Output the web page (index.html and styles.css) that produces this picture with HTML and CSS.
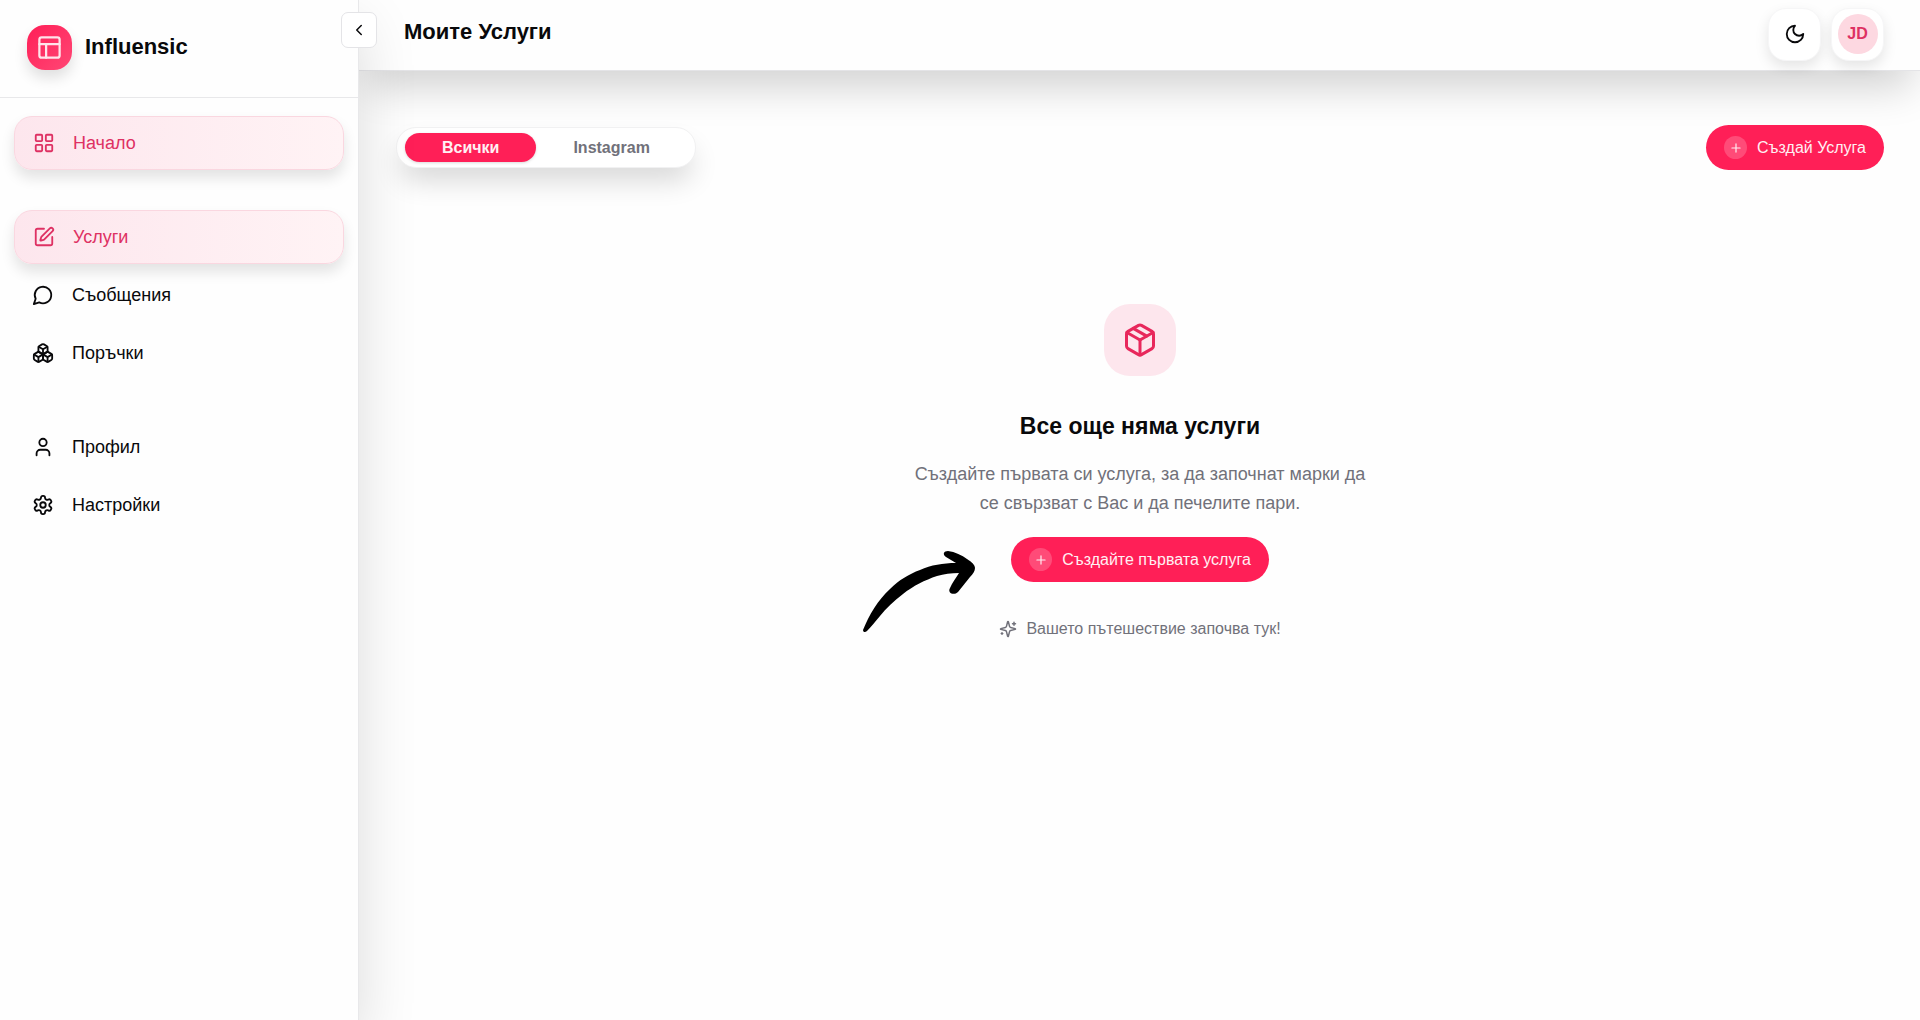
FILE: index.html
```html
<!DOCTYPE html>
<html lang="bg">
<head>
  <meta charset="UTF-8">
  <title>Моите Услуги</title>
  <link rel="stylesheet" href="styles.css">
</head>
<body>
  <div class="app">
    <aside class="sidebar">
      <div class="brand">
        <div class="brand-logo">
          <svg class="icon" viewBox="0 0 24 24"><rect x="3" y="3" width="18" height="18" rx="2"/><path d="M3 9h18M9 21V9"/></svg>
        </div>
        <span class="brand-name">Influensic</span>
      </div>

      <nav class="nav">
        <div class="nav-group">
          <a href="#" class="nav-item active">
            <svg class="icon" viewBox="0 0 24 24"><rect x="3" y="3" width="7" height="7" rx="1"/><rect x="14" y="3" width="7" height="7" rx="1"/><rect x="14" y="14" width="7" height="7" rx="1"/><rect x="3" y="14" width="7" height="7" rx="1"/></svg>
            Начало
          </a>
        </div>
        <div class="nav-group">
          <a href="#" class="nav-item active">
            <svg class="icon" viewBox="0 0 24 24"><path d="M12 3H5a2 2 0 0 0-2 2v14a2 2 0 0 0 2 2h14a2 2 0 0 0 2-2v-7"/><path d="M18.375 2.625a1 1 0 0 1 3 3l-9.013 9.014a2 2 0 0 1-.853.505l-2.873.84a.5.5 0 0 1-.62-.62l.84-2.873a2 2 0 0 1 .506-.852z"/></svg>
            Услуги
          </a>
          <a href="#" class="nav-item">
            <svg class="icon" viewBox="0 0 24 24"><path d="M7.9 20A9 9 0 1 0 4 16.1L2 22Z"/></svg>
            Съобщения
          </a>
          <a href="#" class="nav-item">
            <svg class="icon" viewBox="0 0 24 24"><path d="M2.97 12.92A2 2 0 0 0 2 14.63v3.24a2 2 0 0 0 .97 1.71l3 1.8a2 2 0 0 0 2.06 0L12 19v-5.5l-5-3-4.03 2.42Z"/><path d="m7 16.5-4.74-2.85M7 16.5l5-3M7 16.5v5.17"/><path d="M12 13.5V19l3.97 2.38a2 2 0 0 0 2.06 0l3-1.8a2 2 0 0 0 .97-1.71v-3.24a2 2 0 0 0-.97-1.71L17 10.5l-5 3Z"/><path d="m17 16.5-5-3M17 16.5l4.74-2.85M17 16.5v5.17"/><path d="M7.97 4.42A2 2 0 0 0 7 6.13v4.37l5 3 5-3V6.13a2 2 0 0 0-.97-1.71l-3-1.8a2 2 0 0 0-2.06 0l-3 1.8Z"/><path d="M12 8 7.26 5.15M12 8l4.74-2.85M12 13.5V8"/></svg>
            Поръчки
          </a>
        </div>
        <div class="nav-group">
          <a href="#" class="nav-item">
            <svg class="icon" viewBox="0 0 24 24"><path d="M19 21v-2a4 4 0 0 0-4-4H9a4 4 0 0 0-4 4v2"/><circle cx="12" cy="7" r="4"/></svg>
            Профил
          </a>
          <a href="#" class="nav-item">
            <svg class="icon" viewBox="0 0 24 24"><path d="M12.22 2h-.44a2 2 0 0 0-2 2v.18a2 2 0 0 1-1 1.73l-.43.25a2 2 0 0 1-2 0l-.15-.08a2 2 0 0 0-2.73.73l-.22.38a2 2 0 0 0 .73 2.73l.15.1a2 2 0 0 1 1 1.72v.51a2 2 0 0 1-1 1.74l-.15.09a2 2 0 0 0-.73 2.73l.22.38a2 2 0 0 0 2.73.73l.15-.08a2 2 0 0 1 2 0l.43.25a2 2 0 0 1 1 1.73V20a2 2 0 0 0 2 2h.44a2 2 0 0 0 2-2v-.18a2 2 0 0 1 1-1.73l.43-.25a2 2 0 0 1 2 0l.15.08a2 2 0 0 0 2.73-.73l.22-.39a2 2 0 0 0-.73-2.73l-.15-.08a2 2 0 0 1-1-1.74v-.5a2 2 0 0 1 1-1.74l.15-.09a2 2 0 0 0 .73-2.73l-.22-.38a2 2 0 0 0-2.73-.73l-.15.08a2 2 0 0 1-2 0l-.43-.25a2 2 0 0 1-1-1.73V4a2 2 0 0 0-2-2z"/><circle cx="12" cy="12" r="3"/></svg>
            Настройки
          </a>
        </div>
      </nav>

      <button class="collapse-btn" type="button" aria-label="Скрий менюто">
        <svg class="icon" viewBox="0 0 24 24"><path d="m15 18-6-6 6-6"/></svg>
      </button>
    </aside>

    <div class="page">
      <header class="topbar">
        <h1>Моите Услуги</h1>
        <div class="topbar-actions">
          <button class="square-btn" type="button" aria-label="Тъмна тема">
            <svg class="icon" viewBox="0 0 24 24"><path d="M12 3a6 6 0 0 0 9 9 9 9 0 1 1-9-9Z"/></svg>
          </button>
          <button class="square-btn" type="button"><span class="avatar">JD</span></button>
        </div>
      </header>

      <main class="content">
        <div class="toolbar">
          <div class="tabs">
            <button class="tab selected" type="button">Всички</button>
            <button class="tab" type="button">Instagram</button>
          </div>
          <button class="btn" type="button">
            <span class="plus"><svg class="icon" viewBox="0 0 24 24"><path d="M5 12h14M12 5v14"/></svg></span>
            Създай Услуга
          </button>
        </div>

        <section class="empty">
          <div class="empty-icon">
            <svg class="icon" viewBox="0 0 24 24"><path d="M11 21.73a2 2 0 0 0 2 0l7-4A2 2 0 0 0 21 16V8a2 2 0 0 0-1-1.73l-7-4a2 2 0 0 0-2 0l-7 4A2 2 0 0 0 3 8v8a2 2 0 0 0 1 1.73z"/><path d="M12 22V12"/><path d="m3.3 7 8.7 5 8.7-5"/><path d="m7.5 4.27 9 5.15"/></svg>
          </div>
          <h2>Все още няма услуги</h2>
          <p class="empty-text">Създайте първата си услуга, за да започнат марки да се свързват с Вас и да печелите пари.</p>
          <div class="empty-action">
            <svg class="arrow" viewBox="0 0 112 82"><path d="M0 79C6 64 15 49 27 38C36 29 46 23 57 19C68 14 80 12 93 12L83 6C79 3 81 0 85 0C92 1 99 4 104 8C109 11 112 14 112 17C112 20 110 23 107 26L95 41C91 45 84 42 87 37C89 32 93 27 96 22C88 22 81 23 74 25C62 29 50 35 40 43C31 50 23 57 17 65C12 71 8 76 4 80C2 82 0 81 0 79Z"/></svg>
            <button class="btn" type="button">
              <span class="plus"><svg class="icon" viewBox="0 0 24 24"><path d="M5 12h14M12 5v14"/></svg></span>
              Създайте първата услуга
            </button>
          </div>
          <p class="empty-note">
            <svg class="icon" viewBox="0 0 24 24"><path d="M9.937 15.500A2 2 0 0 0 8.500 14.063l-6.135-1.582a.5.5 0 0 1 0-.962L8.500 9.936A2 2 0 0 0 9.937 8.500l1.582-6.135a.5.5 0 0 1 .963 0L14.063 8.500A2 2 0 0 0 15.500 9.937l6.135 1.581a.5.5 0 0 1 0 .964L15.500 14.063a2 2 0 0 0-1.437 1.437l-1.582 6.135a.5.5 0 0 1-.963 0z"/><path d="M20 3v4M22 5h-4M4 17v2M5 18H3"/></svg>
            Вашето пътешествие започва тук!
          </p>
        </section>
      </main>
    </div>
  </div>
</body>
</html>
```
FILE: styles.css
```css
* {
  box-sizing: border-box;
}
body {
  margin: 0;
  font-family: "Liberation Sans", Arial, sans-serif;
  font-size: 18px;
  color: #09090b;
  background: #fefefe;
}
h1, h2, p {
  margin: 0;
}
button {
  font-family: inherit;
  cursor: pointer;
}
.icon {
  width: 22px;
  height: 22px;
  flex-shrink: 0;
  fill: none;
  stroke: currentColor;
  stroke-width: 2;
  stroke-linecap: round;
  stroke-linejoin: round;
}
.app {
  display: flex;
  min-height: 100vh;
}

/* sidebar */
.sidebar {
  position: relative;
  z-index: 2;
  width: 359px;
  flex-shrink: 0;
  background: #fefefe;
  border-right: 1px solid #e8e8ea;
  box-shadow: 0 24px 56px rgba(0,0,0,0.14);
}
.brand {
  display: flex;
  align-items: center;
  gap: 13px;
  height: 98px;
  padding: 0 27px 3px;
  border-bottom: 1px solid #e8e8ea;
}
.brand-logo {
  display: flex;
  align-items: center;
  justify-content: center;
  width: 45px;
  height: 45px;
  border-radius: 18px;
  color: #ffe4ea;
  background: linear-gradient(135deg, #ff1f57, #ff4775);
  box-shadow: 0 8px 14px rgba(0,0,0,0.12);
}
.brand-logo .icon {
  width: 27px;
  height: 27px;
}
.brand-name {
  font-size: 22px;
  font-weight: bold;
}
.nav {
  display: flex;
  flex-direction: column;
  gap: 40px;
  padding: 18px 14px;
}
.nav-group {
  display: flex;
  flex-direction: column;
  gap: 4px;
}
.nav-item {
  display: flex;
  align-items: center;
  gap: 18px;
  height: 54px;
  padding: 0 18px;
  border-radius: 18px;
  color: #09090b;
  text-decoration: none;
}
.nav-item.active {
  color: #de3163;
  border: 1px solid #fad7e0;
  background: linear-gradient(90deg, #fde6ed, #fff3f5);
  box-shadow: 0 8px 14px rgba(0,0,0,0.11);
}
.collapse-btn {
  position: absolute;
  top: 12px;
  right: -19px;
  display: flex;
  align-items: center;
  justify-content: center;
  width: 36px;
  height: 36px;
  padding: 0;
  color: #09090b;
  background: #fff;
  border: 1px solid #e4e4e7;
  border-radius: 7px;
}
.collapse-btn .icon {
  width: 18px;
  height: 18px;
}

/* top bar */
.page {
  flex: 1;
  min-width: 0;
}
.topbar {
  display: flex;
  align-items: center;
  justify-content: space-between;
  height: 71px;
  padding: 0 36px 2px 45px;
  background: #fefefe;
  border-bottom: 1px solid #e4e4e7;
  box-shadow: 0 24px 40px -8px rgba(0,0,0,0.18);
}
.topbar h1 {
  font-size: 22px;
  line-height: 32px;
  padding-bottom: 4px;
}
.topbar-actions {
  display: flex;
  gap: 10px;
}
.square-btn {
  display: flex;
  align-items: center;
  justify-content: center;
  width: 53px;
  height: 53px;
  padding: 0;
  color: #09090b;
  background: #fff;
  border: 1px solid #f6f6f7;
  border-radius: 18px;
  box-shadow: 0 6px 14px rgba(0,0,0,0.1);
}
.avatar {
  width: 40px;
  height: 40px;
  line-height: 40px;
  border-radius: 50%;
  font-size: 16px;
  font-weight: bold;
  color: #de3163;
  background: #fdd8e1;
}

/* content */
.content {
  padding: 54px 36px 36px 37px;
}
.toolbar {
  display: flex;
  align-items: center;
  justify-content: space-between;
}
.tabs {
  display: flex;
  padding: 5px 8px;
  background: #fff;
  border: 1px solid #f1f1f2;
  border-radius: 20px;
  box-shadow: 0 16px 28px -4px rgba(0,0,0,0.16);
}
.tab {
  padding: 0 37px;
  height: 29px;
  font-size: 16px;
  font-weight: bold;
  color: #71717a;
  background: none;
  border: none;
  border-radius: 15px;
}
.tab.selected {
  color: #fff0f3;
  background: #ff1f57;
  box-shadow: 0 1px 3px rgba(0,0,0,0.15);
}
.btn {
  display: flex;
  align-items: center;
  gap: 10px;
  height: 45px;
  padding: 0 18px;
  font-size: 16px;
  color: #fff0f3;
  background: #ff1f57;
  border: none;
  border-radius: 23px;
}
.plus {
  display: flex;
  align-items: center;
  justify-content: center;
  width: 23px;
  height: 23px;
  border-radius: 50%;
  background: rgba(255,255,255,0.2);
}
.plus .icon {
  width: 14px;
  height: 14px;
}

/* empty state */
.empty {
  display: flex;
  flex-direction: column;
  align-items: center;
  padding-top: 134px;
  text-align: center;
}
.empty-icon {
  display: flex;
  align-items: center;
  justify-content: center;
  width: 72px;
  height: 72px;
  border-radius: 26px;
  color: #e8285c;
  background: #fde6ed;
}
.empty-icon .icon {
  width: 36px;
  height: 36px;
}
.empty h2 {
  margin-top: 34px;
  font-size: 23px;
  line-height: 32px;
}
.empty-text {
  max-width: 470px;
  margin-top: 18px;
  line-height: 29px;
  color: #71717a;
}
.empty-action {
  position: relative;
  margin-top: 19px;
}
/* hand-drawn pointer next to the button */
.arrow {
  position: absolute;
  top: 14px;
  right: 100%;
  width: 112px;
  height: 82px;
  margin-right: 36px;
  fill: #000;
}
.empty-note {
  display: flex;
  align-items: center;
  gap: 9px;
  margin-top: 36px;
  font-size: 16px;
  line-height: 22px;
  color: #71717a;
}
.empty-note .icon {
  width: 18px;
  height: 18px;
}
```
